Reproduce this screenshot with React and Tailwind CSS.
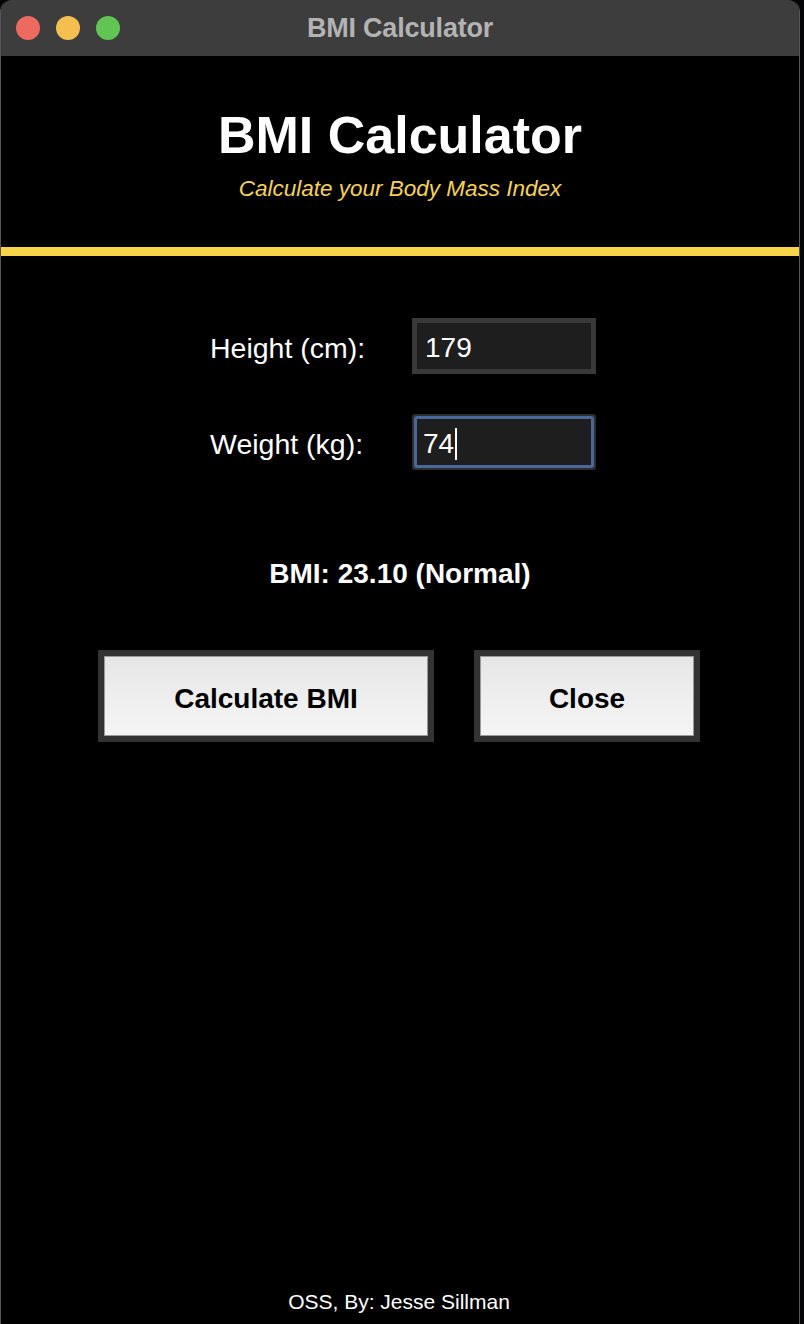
export default function App() {
  const font = { fontFamily: '"Liberation Sans", Arial, Helvetica, sans-serif' };
  return (
    <div className="w-[804px] h-[1324px] bg-[#030507] flex" style={font}>
      <div className="w-[800px] h-[1324px] flex flex-col rounded-t-[12px] overflow-hidden border-x border-[#555]">
        {/* title bar */}
        <div className="h-[56px] bg-[#3c3d3c] flex items-center relative shrink-0">
          <div className="flex items-center gap-[16px] pl-[15px]">
            <div className="w-[24px] h-[24px] rounded-full bg-[#ee6a5f]" />
            <div className="w-[24px] h-[24px] rounded-full bg-[#f5bf4f]" />
            <div className="w-[24px] h-[24px] rounded-full bg-[#61c554]" />
          </div>
          <div className="absolute inset-0 flex items-center justify-center pointer-events-none">
            <span className="text-[27px] font-bold text-[#b3b3b3] tracking-[-0.2px]">BMI Calculator</span>
          </div>
        </div>
        {/* content */}
        <div className="flex-1 bg-black flex flex-col">
          <div className="flex flex-col items-center pt-[49px]">
            <h1 className="text-[52px] leading-[60px] font-bold text-white">BMI Calculator</h1>
            <p className="text-[22.5px] leading-[28px] italic text-[#f8d44a] mt-[10px]">Calculate your Body Mass Index</p>
          </div>
          <div className="h-[9px] bg-[#f8d44a] mt-[44px]" />
          <div className="flex flex-col items-center pt-[62px]">
            <div className="grid grid-cols-[202px_184px] gap-y-[40px] items-center ml-[6px]">
              <label className="text-[28.5px] text-white pt-[5px]">Height (cm):</label>
              <div className="h-[56px] border-[5px] border-[#393939] bg-[#1e1e1e] flex items-center px-[8px]">
                <span className="text-[28px] text-white pt-[4px]">179</span>
              </div>
              <label className="text-[28.5px] text-white pt-[5px]">Weight (kg):</label>
              <div className="h-[56px] p-[2px] bg-[#2e2e2e] rounded-[3px]">
                <div className="h-full border-[3px] border-[#4a6898] rounded-[3px] bg-[#1e1e1e] flex items-center px-[6px]">
                  <span className="text-[28px] text-white pt-[4px]">74</span>
                  <span className="w-[1.5px] h-[32px] bg-white ml-[1px] mt-[4px]" />
                </div>
              </div>
            </div>
            <div className="mt-[88px] text-[28px] leading-[32px] font-bold text-white">BMI: 23.10 (Normal)</div>
            <div className="flex gap-[40px] mt-[60px] ml-[-2px]">
              <button className="w-[336px] h-[92px] bg-[#333] p-[6px] flex">
                <div className="flex-1 border border-[#9a9a9a] bg-gradient-to-b from-[#e6e6e6] to-[#f5f5f5] flex items-center justify-center pt-[5px]">
                  <span className="text-[28px] font-bold text-black">Calculate BMI</span>
                </div>
              </button>
              <button className="w-[226px] h-[92px] bg-[#333] p-[6px] flex">
                <div className="flex-1 border border-[#9a9a9a] bg-gradient-to-b from-[#e6e6e6] to-[#f5f5f5] flex items-center justify-center pt-[5px]">
                  <span className="text-[28px] font-bold text-black">Close</span>
                </div>
              </button>
            </div>
          </div>
          <div className="flex-1" />
          <div className="text-center text-[21px] leading-[28px] text-white pb-[8px] pr-[2px]">OSS, By: Jesse Sillman</div>
        </div>
      </div>
    </div>
  );
}
